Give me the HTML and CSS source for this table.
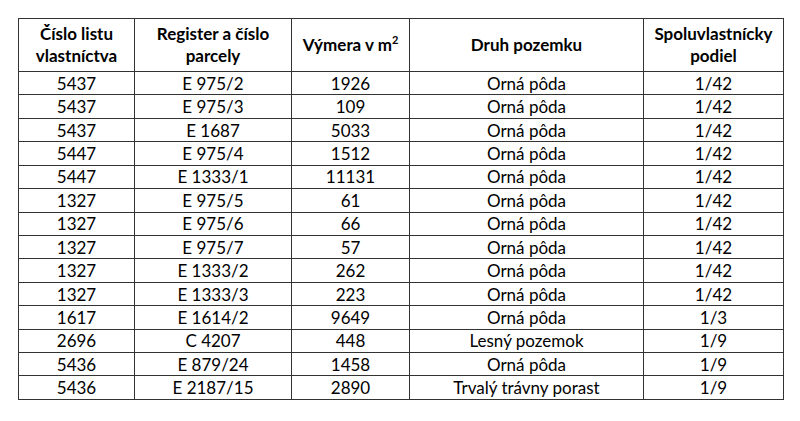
FILE: index.html
```html
<!DOCTYPE html>
<html lang="sk">
<head>
<meta charset="utf-8">
<link rel="stylesheet" href="styles.css">
</head>
<body>
<table class="parcels">
  <colgroup>
    <col class="c1"><col class="c2"><col class="c3"><col class="c4"><col class="c5">
  </colgroup>
  <thead>
    <tr class="head">
      <th>Číslo listu<br>vlastníctva</th>
      <th>Register a číslo<br>parcely</th>
      <th>Výmera v m<sup>2</sup></th>
      <th>Druh pozemku</th>
      <th>Spoluvlastnícky<br>podiel</th>
    </tr>
  </thead>
  <tbody>
    <tr><td>5437</td><td>E 975/2</td><td>1926</td><td>Orná pôda</td><td>1/42</td></tr>
    <tr><td>5437</td><td>E 975/3</td><td>109</td><td>Orná pôda</td><td>1/42</td></tr>
    <tr><td>5437</td><td>E 1687</td><td>5033</td><td>Orná pôda</td><td>1/42</td></tr>
    <tr><td>5447</td><td>E 975/4</td><td>1512</td><td>Orná pôda</td><td>1/42</td></tr>
    <tr><td>5447</td><td>E 1333/1</td><td>11131</td><td>Orná pôda</td><td>1/42</td></tr>
    <tr><td>1327</td><td>E 975/5</td><td>61</td><td>Orná pôda</td><td>1/42</td></tr>
    <tr><td>1327</td><td>E 975/6</td><td>66</td><td>Orná pôda</td><td>1/42</td></tr>
    <tr><td>1327</td><td>E 975/7</td><td>57</td><td>Orná pôda</td><td>1/42</td></tr>
    <tr><td>1327</td><td>E 1333/2</td><td>262</td><td>Orná pôda</td><td>1/42</td></tr>
    <tr><td>1327</td><td>E 1333/3</td><td>223</td><td>Orná pôda</td><td>1/42</td></tr>
    <tr><td>1617</td><td>E 1614/2</td><td>9649</td><td>Orná pôda</td><td>1/3</td></tr>
    <tr><td>2696</td><td>C 4207</td><td>448</td><td>Lesný pozemok</td><td>1/9</td></tr>
    <tr><td>5436</td><td>E 879/24</td><td>1458</td><td>Orná pôda</td><td>1/9</td></tr>
    <tr><td>5436</td><td>E 2187/15</td><td>2890</td><td>Trvalý trávny porast</td><td>1/9</td></tr>
  </tbody>
</table>
</body>
</html>
```
FILE: styles.css
```css
html, body {
  margin: 0;
  padding: 0;
  background: #ffffff;
}
body {
  padding: 18px 0 0 18px;
  font-family: Lato, "Open Sans", sans-serif;
  color: #000000;
}
.parcels {
  border-collapse: collapse;
  table-layout: fixed;
  width: 765px;
}
.c1 { width: 116px; }
.c2 { width: 157px; }
.c3 { width: 118px; }
.c4 { width: 234px; }
.c5 { width: 140px; }
.parcels th,
.parcels td {
  border: 1px solid #333333;
  padding: 0;
  text-align: center;
  vertical-align: middle;
  font-size: 17px;
}
.parcels th {
  font-weight: bold;
  line-height: 22px;
}
.parcels td {
  line-height: 20px;
  padding-top: 1px;
}
.head {
  height: 53px;
}
.parcels tbody tr {
  height: 23.43px;
}
sup {
  font-size: 11px;
  line-height: 0;
  vertical-align: 7px;
}
```
